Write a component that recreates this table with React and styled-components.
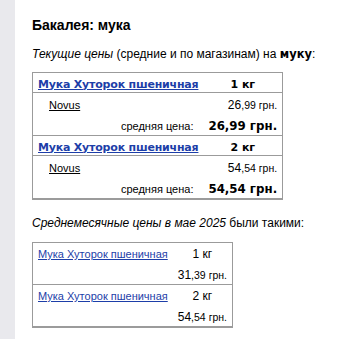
import React from 'react';
import styled, { createGlobalStyle } from 'styled-components';

const Global = createGlobalStyle`
  html, body { margin: 0; padding: 0; background: #fff; }
  body {
    font-family: "Liberation Sans", Arial, sans-serif;
    color: #000;
  }
`;

const Page = styled.div`
  display: flex;
  min-height: 339px;
`;

const Gutter = styled.div`
  flex: none;
  width: 15px;
  background: #e9e9ed;
`;

const Content = styled.main`
  flex: 1;
  padding: 17px 0 0 17px;
`;

const Title = styled.h1`
  margin: 0;
  font-size: 14px;
  line-height: 17px;
  font-weight: bold;
`;

const Lead = styled.p`
  margin: ${p => p.$top}px 0 ${p => p.$bottom}px;
  font-size: 12px;
  line-height: 14px;
`;

const Heavy = styled.b`
  font-family: "DejaVu Sans", Verdana, sans-serif;
  font-size: 11.5px;
`;

const Table = styled.table`
  border-collapse: collapse;
  border: 1px solid #9b9b9b;
  border-bottom-width: 2px;
  width: ${p => p.$width}px;
`;

const Group = styled.tbody`
  & + & > tr:first-child > td {
    border-top: 1px solid #9b9b9b;
  }
`;

const HeadRow = styled.tr`
  & > td {
    border-bottom: ${p => (p.$bold ? '1px solid #9b9b9b' : 'none')};
  }
`;

const Cell = styled.td`
  padding: 0 ${p => p.$pr ?? 5}px 0 5px;
  width: ${p => (p.$w ? `${p.$w}px` : 'auto')};
  height: ${p => p.$h || 20}px;
  text-align: ${p => p.$align || 'left'};
  vertical-align: middle;
  white-space: nowrap;
`;

const ProductLink = styled.a`
  color: #1d3ea8;
  text-decoration: underline;
  font-family: ${p => (p.$bold ? '"DejaVu Sans", Verdana, sans-serif' : '"Liberation Sans", Arial, sans-serif')};
  font-weight: ${p => (p.$bold ? 'bold' : 'normal')};
  font-size: 11px;
  letter-spacing: ${p => (p.$bold ? '-0.2px' : '0')};
`;

const Amount = styled.span`
  font-family: ${p => (p.$bold ? '"DejaVu Sans", Verdana, sans-serif' : '"Liberation Sans", Arial, sans-serif')};
  font-weight: ${p => (p.$bold ? 'bold' : 'normal')};
  font-size: ${p => (p.$bold ? 11 : 12)}px;
`;

const Shop = styled.a`
  color: #000;
  text-decoration: underline;
  font-size: 11px;
  padding-left: 11px;
`;

const Caption = styled.span`
  font-size: 11px;
  color: #000;
`;

const Whole = styled.span`
  font-size: ${p => (p.$bold ? 11.8 : 12)}px;
`;

const Fraction = styled.span`
  font-size: ${p => (p.$bold ? 11.8 : 10.5)}px;
`;

function Price({ value, bold }) {
  const [whole, frac] = value.split(',');
  return (
    <Amount $bold={bold}>
      <Whole $bold={bold}>{whole}</Whole>
      <Fraction $bold={bold}>,{frac} грн.</Fraction>
    </Amount>
  );
}

const current = [
  { name: 'Мука Хуторок пшеничная', pack: '1 кг', shop: 'Novus', price: '26,99' },
  { name: 'Мука Хуторок пшеничная', pack: '2 кг', shop: 'Novus', price: '54,54' },
];

const monthly = [
  { name: 'Мука Хуторок пшеничная', pack: '1 кг', price: '31,39' },
  { name: 'Мука Хуторок пшеничная', pack: '2 кг', price: '54,54' },
];

export default function App() {
  return (
    <>
      <Global />
      <Page>
        <Gutter />
        <Content>
          <Title>Бакалея: мука</Title>
          <Lead $top={13} $bottom={11}>
            <i>Текущие цены</i> (средние и по магазинам) на <Heavy>муку</Heavy>:
          </Lead>
          <Table $width={248}>
            {current.map((item, i) => (
              <Group key={i}>
                <HeadRow $bold>
                  <Cell $h={19}>
                    <ProductLink $bold href="#">{item.name}</ProductLink>
                  </Cell>
                  <Cell $h={19} $w={62} $align="center">
                    <Amount $bold>{item.pack}</Amount>
                  </Cell>
                </HeadRow>
                <tr>
                  <Cell $h={21}>
                    <Shop href="#">{item.shop}</Shop>
                  </Cell>
                  <Cell $h={21} $align="right">
                    <Price value={item.price} />
                  </Cell>
                </tr>
                <tr>
                  <Cell $h={21} $pr={10} $align="right">
                    <Caption>средняя цена:</Caption>
                  </Cell>
                  <Cell $h={21} $align="right">
                    <Price value={item.price} bold />
                  </Cell>
                </tr>
              </Group>
            ))}
          </Table>
          <Lead $top={16} $bottom={12}>
            <i>Среднемесячные цены в мае 2025</i> были такими:
          </Lead>
          <Table $width={201}>
            {monthly.map((item, i) => (
              <Group key={i}>
                <HeadRow>
                  <Cell $h={20}>
                    <ProductLink href="#">{item.name}</ProductLink>
                  </Cell>
                  <Cell $h={20} $align="center">
                    <Amount>{item.pack}</Amount>
                  </Cell>
                </HeadRow>
                <tr>
                  <Cell $h={21} />
                  <Cell $h={21} $align="right">
                    <Price value={item.price} />
                  </Cell>
                </tr>
              </Group>
            ))}
          </Table>
        </Content>
      </Page>
    </>
  );
}
